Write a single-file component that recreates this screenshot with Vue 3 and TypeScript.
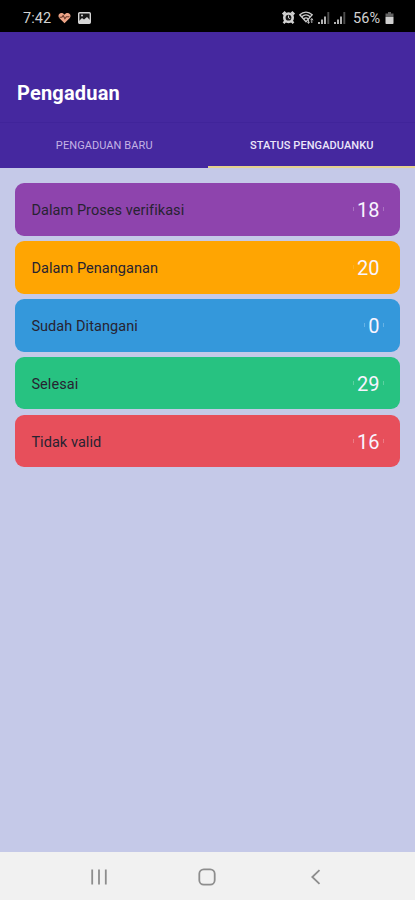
<script setup lang="ts">
interface StatusItem {
  label: string
  count: number
  tone: string
}

const tabs: { label: string; active: boolean }[] = [
  { label: 'PENGADUAN BARU', active: false },
  { label: 'STATUS PENGADUANKU', active: true },
]

const items: StatusItem[] = [
  { label: 'Dalam Proses verifikasi', count: 18, tone: 'purple' },
  { label: 'Dalam Penanganan', count: 20, tone: 'orange' },
  { label: 'Sudah Ditangani', count: 0, tone: 'blue' },
  { label: 'Selesai', count: 29, tone: 'green' },
  { label: 'Tidak valid', count: 16, tone: 'red' },
]
</script>

<template>
  <div class="screen">
    <div class="statusbar">
      <span class="time">7:42</span>
      <svg class="heart" width="13" height="12" viewBox="0 0 13 12">
        <path d="M6.5 11.3 1.2 6C-.4 4 .8 1 3.4 1c1.400 0 2.400.7 3.100 1.700C7.200 1.700 8.200 1 9.600 1c2.600 0 3.800 3 2.200 5z" fill="#eda587" />
        <path d="M1.500 5.200h2.400l1.300-1.700 1.700 3.200 1.500-2h3" fill="none" stroke="#6b3a2c" stroke-width="1.100" />
      </svg>
      <svg class="photo" width="13" height="12" viewBox="0 0 13 12">
        <rect x=".7" y=".7" width="11.600" height="10.600" rx="1" fill="#161616" stroke="#d6d6d6" stroke-width="1.400" />
        <path d="M1 9 4 6l2 1.600L9 5l3 3v3H1z" fill="#d6d6d6" />
        <circle cx="4" cy="3.500" r="1" fill="#d6d6d6" />
      </svg>
      <div class="indicators">
        <svg width="13" height="13" viewBox="0 0 13 13">
          <path d="M.8 3.500 3.500.9M12.200 3.500 9.500.9M1.500 12.200l2.300-2.300M11.500 12.200 9.200 9.900" stroke="#d2d2d2" stroke-width="2.400" />
          <circle cx="6.500" cy="6.700" r="5.500" fill="#d2d2d2" />
          <circle cx="6.500" cy="6.700" r="2.900" fill="#171717" />
          <path d="M6.500 4.500v2.400l1.700.8" fill="none" stroke="#d2d2d2" stroke-width="1" />
        </svg>
        <svg class="wifi" width="16" height="13" viewBox="0 0 16 13">
          <g fill="none" stroke="#cdcdcd" stroke-width="1.300">
            <path d="M.8 3.800C4.500.2 9.500.2 13.200 3.800L7 10.800z" />
            <path d="M2.800 5.800c2.500-2.300 5.900-2.300 8.400 0M4.800 7.800c1.300-1 3.100-1 4.400 0" />
          </g>
          <path d="M9.500 8v4.500M12.800 7.500V12" stroke="#bdbdbd" stroke-width="1" />
          <path d="m8.200 10.700 1.300 1.600 1.300-1.600M11.500 9.200l1.300-1.600 1.300 1.600" fill="none" stroke="#bdbdbd" />
        </svg>
        <svg v-for="n in 2" :key="n" class="signal" width="12" height="12" viewBox="0 0 12 12">
          <path d="M1 10v2M4 7.500V12M7 4.500V12" stroke="#bababa" stroke-width="1.900" />
          <path d="M10.300 0v12" stroke="#4d4d4d" stroke-width="1.900" />
        </svg>
        <span class="percent">56%</span>
        <svg class="battery" width="9" height="12" viewBox="0 0 8 12">
          <path d="M2.500 0h3v1.500H8V5H0V1.500h2.500z" fill="#636363" />
          <path d="M0 5h8v6.200q0 .8-.8.8H.8q-.8 0-.8-.8z" fill="#d0d0d0" />
        </svg>
      </div>
    </div>

    <header class="appbar"><h1>Pengaduan</h1></header>
    <nav class="tabs">
      <div v-for="tab in tabs" :key="tab.label" class="tab" :class="{ active: tab.active }">
        <span>{{ tab.label }}</span>
      </div>
    </nav>

    <main class="list">
      <div v-for="item in items" :key="item.label" class="card" :class="item.tone">
        <span class="label">{{ item.label }}</span>
        <span class="count">{{ item.count }}</span>
      </div>
    </main>

    <footer class="navbar">
      <svg width="16" height="16" viewBox="0 0 16 16">
        <path d="M1.200.5v15M8 .5v15M14.800.5v15" stroke="#8d8d8d" stroke-width="1.800" />
      </svg>
      <svg width="18" height="18" viewBox="0 0 18 18">
        <rect x="1.300" y="1.300" width="15.400" height="15.400" rx="4.500" fill="none" stroke="#8d8d8d" stroke-width="1.800" />
      </svg>
      <svg width="16" height="16" viewBox="0 0 16 16">
        <path d="M11.500 1.200 4.300 8l7.200 6.800" fill="none" stroke="#8d8d8d" stroke-width="1.800" />
      </svg>
    </footer>
  </div>
</template>

<style>
body {
  margin: 0;
}
</style>

<style scoped>
.screen {
  display: flex;
  flex-direction: column;
  width: 415px;
  height: 900px;
  overflow: hidden;
  background: #c5c9e8;
  font-family: Roboto, 'Liberation Sans', sans-serif;
}
.screen svg {
  display: block;
  flex: none;
}
.statusbar {
  box-sizing: border-box;
  display: flex;
  align-items: center;
  flex: none;
  height: 32px;
  padding: 3px 21px 0 23px;
  background: #000;
  color: #d2d2d2;
  font-size: 14.500px;
}
.time {
  width: 29px;
  padding-top: 1px;
  letter-spacing: 0.1px;
}
.heart {
  margin-left: 6px;
}
.photo {
  margin-left: 7px;
}
.indicators {
  display: flex;
  align-items: center;
  margin-left: auto;
}
.wifi {
  margin-left: 4px;
}
.signal {
  margin-left: 3px;
}
.signal + .signal {
  margin-left: 4px;
}
.percent {
  margin-left: 7px;
  width: 28px;
  padding-top: 1px;
  letter-spacing: 0.1px;
}
.battery {
  margin-left: 4px;
}
.appbar {
  box-sizing: border-box;
  flex: none;
  height: 90px;
  padding: 49px 17px 0;
  background: #45289f;
}
h1 {
  margin: 0;
  color: #fff;
  font-size: 20px;
  font-weight: 700;
  letter-spacing: 0.18px;
  line-height: 25px;
}
.tabs {
  display: flex;
  flex: none;
  height: 46px;
  background: #45289f;
  border-top: 1px solid #40249a;
  box-sizing: border-box;
}
.tab {
  box-sizing: border-box;
  display: flex;
  align-items: center;
  justify-content: center;
  flex: 1;
  padding: 2px 0 0 1px;
  border-bottom: 2px solid transparent;
  color: #c4b3e5;
  font-size: 11px;
  letter-spacing: 0.08px;
}
.tab.active {
  border-bottom-color: #e5d18e;
  color: #ece6fa;
  font-weight: 500;
}
.list {
  display: flex;
  flex: 1;
  flex-direction: column;
  gap: 5.500px;
  padding: 15.400px 15px 0 15.400px;
}
.card {
  box-sizing: border-box;
  display: flex;
  align-items: center;
  justify-content: space-between;
  height: 52.400px;
  padding: 1px 16px 0 16px;
  border-radius: 9px;
}
.label {
  padding-top: 1px;
  color: #272331;
  font-size: 14.500px;
  letter-spacing: 0.06px;
}
.count {
  display: flex;
  align-items: center;
  gap: 3.500px;
  color: #f8f4ff;
  font-size: 20px;
}
.count::before,
.count::after {
  content: '';
  width: 1px;
  height: 4px;
  margin-bottom: 2px;
  background: rgba(255, 255, 255, 0.25);
}
.orange .count::before {
  opacity: 0.5;
}
.orange .count::after {
  opacity: 0;
}
.purple { background: #8e44ad; }
.orange { background: #ffa502; }
.blue { background: #3498db; }
.green { background: #27c281; }
.red { background: #e74f5b; }
.navbar {
  box-sizing: border-box;
  display: flex;
  align-items: center;
  justify-content: space-between;
  flex: none;
  height: 48px;
  padding: 2px 91.500px 0 91px;
  background: #f1f1f1;
}
</style>
